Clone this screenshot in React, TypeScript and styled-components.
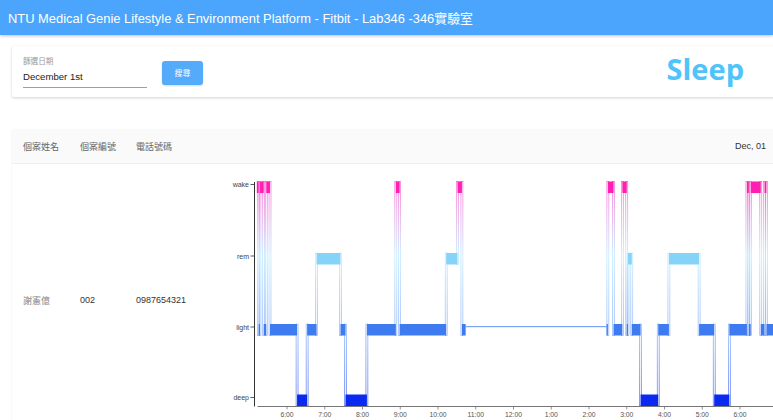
import styled, { createGlobalStyle } from 'styled-components';

const GlobalStyle = createGlobalStyle`
  html, body {
    margin: 0;
    background: #fff;
    overflow: hidden;
  }
  body {
    font-family: "Liberation Sans", "Noto Sans CJK TC", sans-serif;
  }
`;

const Header = styled.header`
  height: 35px;
  display: flex;
  align-items: center;
  padding: 0 8px;
  background-color: #4ba5fd;
  color: #fff;
  font-size: 12.9px;
  box-shadow: 0 1px 3px rgba(0, 0, 0, 0.25);
`;

const Page = styled.main`
  width: 765px;
  padding: 11px 12px 0;
`;

const FilterCard = styled.section`
  display: flex;
  align-items: center;
  padding: 11px 33px 9px 11px;
  background: #fff;
  border-radius: 2px;
  box-shadow: 0 1px 3px rgba(0, 0, 0, 0.18);
`;

const Field = styled.div`
  display: flex;
  flex-direction: column;
  width: 124px;
`;

const FieldLabel = styled.label`
  font-size: 7.6px;
  line-height: 9px;
  color: #999;
  margin-bottom: 4px;
`;

const DateInput = styled.div`
  font-size: 9.6px;
  line-height: 12px;
  color: #222;
  padding: 1px 0 4px;
  border-bottom: 1px solid #9aa0a4;
`;

const SearchButton = styled.button`
  margin-left: 15px;
  width: 41px;
  height: 24px;
  border: none;
  border-radius: 3px;
  background: #53abfa;
  color: #fff;
  font-family: inherit;
  font-size: 8px;
  box-shadow: 0 1px 2px rgba(0, 0, 0, 0.15);
`;

const Brand = styled.div`
  margin-left: auto;
  font-family: "Open Sans", sans-serif;
  font-weight: 700;
  font-size: 29px;
  line-height: 32px;
  color: #4ec4f8;
  margin-top: -8px;
`;

const TableCard = styled.section`
  margin-top: 32px;
  background: #fff;
  box-shadow: 0 1px 2px rgba(0, 0, 0, 0.08);
`;

const Row = styled.div<{ $head?: boolean }>`
  display: grid;
  grid-template-columns: 57px 56px 64px 1fr;
  align-items: center;
  padding: ${(p) => (p.$head ? '0 11px' : '8px 0 8px 11px')};
  height: ${(p) => (p.$head ? '34px' : 'auto')};
  background: ${(p) => (p.$head ? '#fafafa' : '#fff')};
  border-bottom: 1px solid #efefef;
`;

const Cell = styled.div<{ $tone?: 'head' | 'soft' | 'dark' }>`
  font-size: 9px;
  white-space: nowrap;
  color: ${(p) => (p.$tone === 'head' ? '#666' : p.$tone === 'soft' ? '#888' : '#333')};
`;

const DateCell = styled(Cell)`
  text-align: right;
`;

const ChartSvg = styled.svg`
  display: block;
  overflow: hidden;
`;

type Stage = 'wake' | 'rem' | 'light' | 'deep' | 'gap';

const sleepLog: [string, Stage][] = [
  ['5:12', 'wake'], ['5:15', 'light'], ['5:17', 'wake'], ['5:23', 'light'],
  ['5:27', 'wake'], ['5:33', 'light'], ['6:16', 'deep'], ['6:32', 'light'],
  ['6:47', 'rem'], ['7:25', 'light'], ['7:33', 'deep'], ['8:07', 'light'],
  ['8:53', 'wake'], ['8:59', 'light'], ['10:13', 'rem'], ['10:31', 'wake'],
  ['10:38', 'light'], ['10:44', 'gap'], ['14:28', 'light'], ['14:30', 'wake'],
  ['14:39', 'light'], ['14:53', 'wake'], ['15:00', 'light'], ['15:02', 'rem'],
  ['15:08', 'light'], ['15:22', 'deep'], ['15:50', 'light'], ['16:07', 'rem'],
  ['16:55', 'light'], ['17:19', 'deep'], ['17:43', 'light'], ['18:11', 'wake'],
  ['18:14', 'light'], ['18:17', 'wake'], ['18:33', 'light'], ['18:39', 'wake'],
  ['18:42', 'light'],
];
const logEnd = '19:20';

const levelTop: Record<Exclude<Stage, 'gap'>, number> = {
  wake: 9.5,
  rem: 81,
  light: 152,
  deep: 222.5,
};
const stageColor: Record<Exclude<Stage, 'gap'>, string> = {
  wake: '#ff1fb0',
  rem: '#86d3fa',
  light: '#3e7bf0',
  deep: '#0a2af2',
};
const BAR_H = 11.5;
const AXIS_X = 54.5;
const AXIS_Y = 234.5;

const minutes = (t: string) => {
  const [h, m] = t.split(':').map(Number);
  return h * 60 + m;
};
const xOf = (t: string) => 87 + (minutes(t) - 360) * (37.75 / 60);
const top = (s: Stage) => levelTop[s === 'gap' ? 'light' : s];

const hours = [6, 7, 8, 9, 10, 11, 12, 13, 14, 15, 16, 17, 18];

const SleepChart = () => {
  const segments = sleepLog.map(([start, stage], i) => ({
    stage,
    x0: xOf(start),
    x1: xOf(i + 1 < sleepLog.length ? sleepLog[i + 1][0] : logEnd),
  }));

  return (
    <ChartSvg width={577} height={256}>
      <defs>
        <linearGradient id="stageFade" gradientUnits="userSpaceOnUse" x1="0" y1="10" x2="0" y2="234">
          <stop offset="0" stopColor="#ff4fcc" />
          <stop offset="0.33" stopColor="#b5e7ff" />
          <stop offset="0.66" stopColor="#7fa9f8" />
          <stop offset="1" stopColor="#3b58f0" />
        </linearGradient>
      </defs>

      {segments.slice(1).map((seg, i) => {
        const prev = segments[i];
        if (top(prev.stage) === top(seg.stage)) return null;
        const y0 = Math.min(top(prev.stage), top(seg.stage));
        const y1 = Math.max(top(prev.stage), top(seg.stage)) + BAR_H;
        return (
          <rect
            key={`c${i}`}
            x={seg.x0 - 1}
            y={y0}
            width={2}
            height={y1 - y0}
            fill="url(#stageFade)"
            fillOpacity={0.1}
            stroke="url(#stageFade)"
            strokeWidth={0.6}
          />
        );
      })}

      {segments.map((seg, i) =>
        seg.stage === 'gap' ? (
          <rect key={i} x={seg.x0} y={top('light') + 2} width={seg.x1 - seg.x0} height={1.2} fill="#7ba4f8" />
        ) : (
          <rect
            key={i}
            x={seg.x0}
            y={levelTop[seg.stage]}
            width={seg.x1 - seg.x0}
            height={BAR_H}
            fill={stageColor[seg.stage]}
          />
        )
      )}

      <line x1={AXIS_X} y1={10} x2={AXIS_X} y2={AXIS_Y} stroke="#333" strokeWidth={1} />
      {(Object.keys(levelTop) as (keyof typeof levelTop)[]).map((s) => (
        <g key={s}>
          <line x1={AXIS_X - 4} y1={levelTop[s] + 3} x2={AXIS_X} y2={levelTop[s] + 3} stroke="#333" strokeWidth={0.8} />
          <text
            x={AXIS_X - 5.5}
            y={levelTop[s] + 3}
            fontSize={7}
            fill="#444"
            textAnchor="end"
            dominantBaseline="central"
            fontFamily="Liberation Sans, sans-serif"
          >
            {s}
          </text>
        </g>
      ))}

      <line x1={57.5} y1={AXIS_Y} x2={577} y2={AXIS_Y} stroke="#777" strokeWidth={1} />
      {hours.map((h) => {
        const x = xOf(`${h}:00`);
        return (
          <g key={h}>
            <line x1={x} y1={AXIS_Y} x2={x} y2={AXIS_Y + 3} stroke="#777" strokeWidth={0.8} />
            <text
              x={x}
              y={AXIS_Y + 7.5}
              fontSize={6.8}
              fill="#555"
              textAnchor="middle"
              dominantBaseline="central"
              fontFamily="Liberation Sans, sans-serif"
            >
              {`${h > 12 ? h - 12 : h}:00`}
            </text>
          </g>
        );
      })}
    </ChartSvg>
  );
};

export default function App() {
  return (
    <>
      <GlobalStyle />
      <Header>NTU Medical Genie Lifestyle &amp; Environment Platform - Fitbit - Lab346 -346實驗室</Header>
      <Page>
        <FilterCard>
          <Field>
            <FieldLabel>篩選日期</FieldLabel>
            <DateInput>December 1st</DateInput>
          </Field>
          <SearchButton>搜尋</SearchButton>
          <Brand>Sleep</Brand>
        </FilterCard>

        <TableCard>
          <Row $head>
            <Cell $tone="head">個案姓名</Cell>
            <Cell $tone="head">個案編號</Cell>
            <Cell $tone="head">電話號碼</Cell>
            <DateCell>Dec, 01</DateCell>
          </Row>
          <Row>
            <Cell $tone="soft">謝憲億</Cell>
            <Cell>002</Cell>
            <Cell>0987654321</Cell>
            <SleepChart />
          </Row>
        </TableCard>
      </Page>
    </>
  );
}
